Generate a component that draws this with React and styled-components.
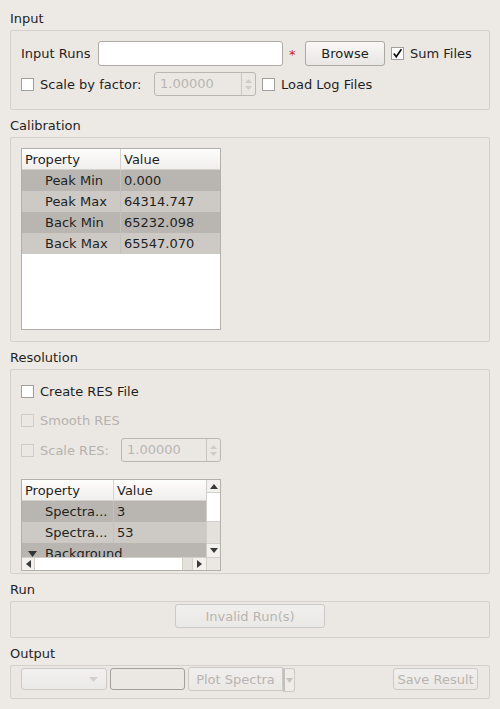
import React from "react";
import styled, { createGlobalStyle } from "styled-components";

const GlobalStyle = createGlobalStyle`
  html, body {
    margin: 0;
    padding: 0;
    background: #edeae6;
  }
  body {
    font-family: "DejaVu Sans", "Liberation Sans", sans-serif;
    font-size: 13px;
    color: #1f1f1f;
  }
`;

const Page = styled.div`
  width: 500px;
  height: 709px;
  box-sizing: border-box;
  padding: 8px 10px 0 10px;
  display: flex;
  flex-direction: column;
  gap: 5px;
`;

const Section = styled.section`
  display: flex;
  flex-direction: column;
`;

const Title = styled.div`
  height: 20px;
  line-height: 22px;
  margin-bottom: 2px;
`;

const Group = styled.div`
  box-sizing: border-box;
  height: ${(p) => p.$h}px;
  border: 1px solid #d4d0cb;
  border-radius: 2px;
  background: #ebe8e4;
  padding: ${(p) => p.$pad};
  display: flex;
  flex-direction: column;
  gap: ${(p) => p.$gap || 0}px;
`;

const Row = styled.div`
  display: flex;
  align-items: center;
  height: ${(p) => p.$h || 24}px;
  margin-top: ${(p) => p.$mt || 0}px;
`;

const Label = styled.span`
  width: ${(p) => (p.$w ? `${p.$w}px` : "auto")};
  flex-shrink: 0;
  white-space: nowrap;
  color: ${(p) => (p.$disabled ? "#b6b2ae" : "#1f1f1f")};
  margin-left: ${(p) => p.$ml || 0}px;
`;

const TextInput = styled.div`
  box-sizing: border-box;
  width: ${(p) => p.$w}px;
  height: ${(p) => p.$h || 25}px;
  background: ${(p) => (p.$disabled ? "#ebe8e4" : "#ffffff")};
  border: 1px solid ${(p) => (p.$disabled ? "#a39f9a" : "#aeaaa5")};
  border-radius: 3px;
  margin-left: ${(p) => p.$ml || 0}px;
`;

const Star = styled.span`
  color: #cc1f1f;
  width: 8px;
  margin-left: 6px;
  font-size: 13px;
  line-height: 13px;
  padding-top: 2px;
`;

const Button = styled.div`
  box-sizing: border-box;
  width: ${(p) => p.$w}px;
  height: ${(p) => p.$h || 24}px;
  margin-left: ${(p) => p.$ml || 0}px;
  display: flex;
  align-items: center;
  justify-content: center;
  border: 1px solid ${(p) => (p.$disabled ? "#cdc9c5" : "#aca8a3")};
  border-radius: ${(p) => p.$radius || "3px"};
  background: ${(p) =>
    p.$disabled
      ? "linear-gradient(#f1efed, #ebe9e6)"
      : "linear-gradient(#f9f8f7, #e9e7e4)"};
  color: ${(p) => (p.$disabled ? "#b8b4b0" : "#1f1f1f")};
  white-space: nowrap;
`;

const Box = styled.span`
  box-sizing: border-box;
  width: 13px;
  height: 13px;
  flex-shrink: 0;
  display: inline-flex;
  align-items: center;
  justify-content: center;
  background: ${(p) => (p.$disabled ? "#ebe8e4" : "#ffffff")};
  border: 1px solid ${(p) => (p.$disabled ? "#cfcbc7" : "#a29e99")};
  margin-left: ${(p) => p.$ml || 0}px;
`;

function CheckBox({ checked, disabled, ml }) {
  return (
    <Box $disabled={disabled} $ml={ml}>
      {checked && (
        <svg width="11" height="11" viewBox="0 0 11 11">
          <path d="M1.8 5.6 L4.2 8.8 L9.4 1.2" fill="none" stroke="#111" strokeWidth="1.7" />
        </svg>
      )}
    </Box>
  );
}

const Spin = styled.div`
  box-sizing: border-box;
  width: ${(p) => p.$w}px;
  height: 24px;
  margin-left: ${(p) => p.$ml || 0}px;
  border: 1px solid #bab6b1;
  border-radius: 3px;
  display: flex;
  background: #ebe8e4;
  color: #b9b5b1;
`;

const SpinText = styled.span`
  flex: 1;
  padding-left: 5px;
  line-height: 22px;
`;

const SpinArrows = styled.span`
  width: 13px;
  border-left: 1px solid #c9c5c1;
  display: flex;
  flex-direction: column;
  align-items: center;
  justify-content: center;
  gap: 3px;
`;

function SpinBox({ w, ml }) {
  return (
    <Spin $w={w} $ml={ml}>
      <SpinText>1.00000</SpinText>
      <SpinArrows>
        <svg width="7" height="4" viewBox="0 0 7 4"><polygon points="0,4 3.5,0 7,4" fill="#cfcbc7" /></svg>
        <svg width="7" height="4" viewBox="0 0 7 4"><polygon points="0,0 3.5,4 7,0" fill="#cfcbc7" /></svg>
      </SpinArrows>
    </Spin>
  );
}

const Table = styled.div`
  box-sizing: border-box;
  width: 200px;
  height: ${(p) => p.$h}px;
  border: 1px solid #b3afaa;
  background: #ffffff;
  display: grid;
  grid-template-columns: ${(p) => (p.$scroll ? "184px 14px" : "198px")};
  grid-template-rows: ${(p) => (p.$scroll ? "77px 13px" : "1fr")};
  overflow: hidden;
`;

const View = styled.div`
  overflow: hidden;
  background: #ffffff;
`;

const TRow = styled.div`
  display: grid;
  grid-template-columns: ${(p) => p.$cols};
  height: 21px;
  line-height: 21px;
  background: ${(p) =>
    p.$head ? "linear-gradient(#fdfdfc, #f1efec)" : p.$dark ? "#b9b6b2" : "#cdcac6"};
  border-bottom: ${(p) => (p.$head ? "1px solid #d6d3cf" : "0")};
  box-sizing: border-box;
`;

const Cell = styled.div`
  padding-left: ${(p) => p.$pl || 3}px;
  white-space: nowrap;
  overflow: hidden;
  border-right: ${(p) => (p.$last ? "0" : p.$head ? "1px solid #d6d3cf" : "1px solid #c4c1bd")};
  display: flex;
  align-items: center;
`;

const Caret = styled.span`
  width: 17px;
  display: inline-flex;
  align-items: center;
`;

const ScrollV = styled.div`
  display: flex;
  flex-direction: column;
  background: #e4e1dd;
  border-left: 1px solid #d2cfcb;
`;

const ScrollH = styled.div`
  display: flex;
  background: #e4e1dd;
  border-top: 1px solid #d2cfcb;
`;

const ArrowBtn = styled.div`
  flex-shrink: 0;
  width: ${(p) => p.$w}px;
  height: ${(p) => p.$h}px;
  display: flex;
  align-items: center;
  justify-content: center;
  background: #f3f1ee;
  border-${(p) => p.$side}: 1px solid #d2cfcb;
  box-sizing: border-box;
`;

const Handle = styled.div`
  box-sizing: border-box;
  ${(p) => (p.$vertical ? `height: ${p.$size}px;` : `width: ${p.$size}px;`)}
  background: #ffffff;
  border-${(p) => (p.$vertical ? "bottom" : "right")}: 1px solid #d2cfcb;
`;

const Track = styled.div`
  flex: 1;
`;

const Corner = styled.div`
  background: #ebe8e4;
  border-top: 1px solid #d2cfcb;
  border-left: 1px solid #d2cfcb;
`;

const Tri = ({ dir }) => {
  const pts = {
    up: "0,5 4,0 8,5",
    down: "0,0 4,5 8,0",
    left: "5,0 0,4 5,8",
    right: "0,0 5,4 0,8",
  }[dir];
  const vert = dir === "up" || dir === "down";
  return (
    <svg width={vert ? 8 : 5} height={vert ? 5 : 8} viewBox={vert ? "0 0 8 5" : "0 0 5 8"}>
      <polygon points={pts} fill="#3a3a3a" />
    </svg>
  );
};

const CenterRow = styled.div`
  display: flex;
  justify-content: center;
`;

const Combo = styled.div`
  box-sizing: border-box;
  width: 86px;
  height: 22px;
  border: 1px solid #cdc9c5;
  border-radius: 3px;
  background: linear-gradient(#f3f1ef, #eceae7);
  display: flex;
  align-items: center;
  justify-content: flex-end;
  padding-right: 8px;
`;

const SplitArrow = styled.div`
  box-sizing: border-box;
  width: 12px;
  height: 24px;
  border: 1px solid #cdc9c5;
  border-left: 2px solid #c3bfbb;
  border-radius: 0 3px 3px 0;
  background: #eeebe8;
  display: flex;
  align-items: center;
  justify-content: center;
  margin-top: 2px;
`;

const Spacer = styled.div`
  flex: 1;
`;

const calibration = [
  ["Peak Min", "0.000"],
  ["Peak Max", "64314.747"],
  ["Back Min", "65232.098"],
  ["Back Max", "65547.070"],
];

export default function App() {
  return (
    <>
      <GlobalStyle />
      <Page>
        <Section>
          <Title>Input</Title>
          <Group $h={80} $pad="10px 10px 0 10px" $gap={6}>
            <Row $h={25}>
              <Label $w={77}>Input Runs</Label>
              <TextInput $w={185} />
              <Star>*</Star>
              <Button $w={80} $h={25} $ml={8}>Browse</Button>
              <CheckBox checked ml={6} />
              <Label $ml={6}>Sum Files</Label>
            </Row>
            <Row>
              <CheckBox />
              <Label $w={114} $ml={6}>Scale by factor:</Label>
              <SpinBox w={102} />
              <CheckBox ml={6} />
              <Label $ml={6}>Load Log Files</Label>
            </Row>
          </Group>
        </Section>

        <Section>
          <Title>Calibration</Title>
          <Group $h={205} $pad="10px 10px 0 10px">
            <Table $h={182}>
              <View>
                <TRow $head $cols="99px 1fr">
                  <Cell $head>Property</Cell>
                  <Cell $head $last>Value</Cell>
                </TRow>
                {calibration.map(([k, v], i) => (
                  <TRow key={k} $dark={i % 2 === 0} $cols="99px 1fr">
                    <Cell $pl={23}>{k}</Cell>
                    <Cell $last>{v}</Cell>
                  </TRow>
                ))}
              </View>
            </Table>
          </Group>
        </Section>

        <Section>
          <Title>Resolution</Title>
          <Group $h={205} $pad="9px 10px 0 10px">
            <Row>
              <CheckBox />
              <Label $ml={6}>Create RES File</Label>
            </Row>
            <Row $mt={5}>
              <CheckBox disabled />
              <Label $ml={6} $disabled>Smooth RES</Label>
            </Row>
            <Row $mt={6}>
              <CheckBox disabled />
              <Label $w={81} $ml={6} $disabled>Scale RES:</Label>
              <SpinBox w={100} />
            </Row>
            <Row $h={92} $mt={17}>
              <Table $h={92} $scroll>
                <View>
                  <TRow $head $cols="92px 1fr">
                    <Cell $head>Property</Cell>
                    <Cell $head $last>Value</Cell>
                  </TRow>
                  <TRow $dark $cols="92px 1fr">
                    <Cell $pl={23}>Spectra...</Cell>
                    <Cell $last>3</Cell>
                  </TRow>
                  <TRow $cols="92px 1fr">
                    <Cell $pl={23}>Spectra...</Cell>
                    <Cell $last>53</Cell>
                  </TRow>
                  <TRow $dark $cols="1fr">
                    <Cell $pl={6} $last>
                      <Caret>
                        <svg width="9" height="6" viewBox="0 0 9 6"><polygon points="0,0 4.5,6 9,0" fill="#333" /></svg>
                      </Caret>
                      Background
                    </Cell>
                  </TRow>
                </View>
                <ScrollV>
                  <ArrowBtn $w={13} $h={13} $side="bottom"><Tri dir="up" /></ArrowBtn>
                  <Handle $vertical $size={29} />
                  <Track />
                  <ArrowBtn $w={13} $h={14} $side="top"><Tri dir="down" /></ArrowBtn>
                </ScrollV>
                <ScrollH>
                  <ArrowBtn $w={13} $h={12} $side="right"><Tri dir="left" /></ArrowBtn>
                  <Handle $size={148} />
                  <Track />
                  <ArrowBtn $w={14} $h={12} $side="left"><Tri dir="right" /></ArrowBtn>
                </ScrollH>
                <Corner />
              </Table>
            </Row>
          </Group>
        </Section>

        <Section>
          <Title>Run</Title>
          <Group $h={37} $pad="2px 0 0 0">
            <CenterRow>
              <Button $w={150} $disabled>Invalid Run(s)</Button>
            </CenterRow>
          </Group>
        </Section>

        <Section>
          <Title>Output</Title>
          <Group $h={34} $pad="1px 11px 0 10px">
            <Row $h={24}>
              <Combo>
                <svg width="9" height="5" viewBox="0 0 9 5"><polygon points="0,0 4.5,5 9,0" fill="#d3cfcb" /></svg>
              </Combo>
              <TextInput $w={75} $h={22} $ml={3} $disabled />
              <Button $w={95} $ml={3} $radius="3px 0 0 3px" $disabled>Plot Spectra</Button>
              <SplitArrow>
                <svg width="7" height="5" viewBox="0 0 7 5"><polygon points="0,0 3.5,5 7,0" fill="#c6c2be" /></svg>
              </SplitArrow>
              <Spacer />
              <Button $w={85} $h={22} $disabled>Save Result</Button>
            </Row>
          </Group>
        </Section>
      </Page>
    </>
  );
}
